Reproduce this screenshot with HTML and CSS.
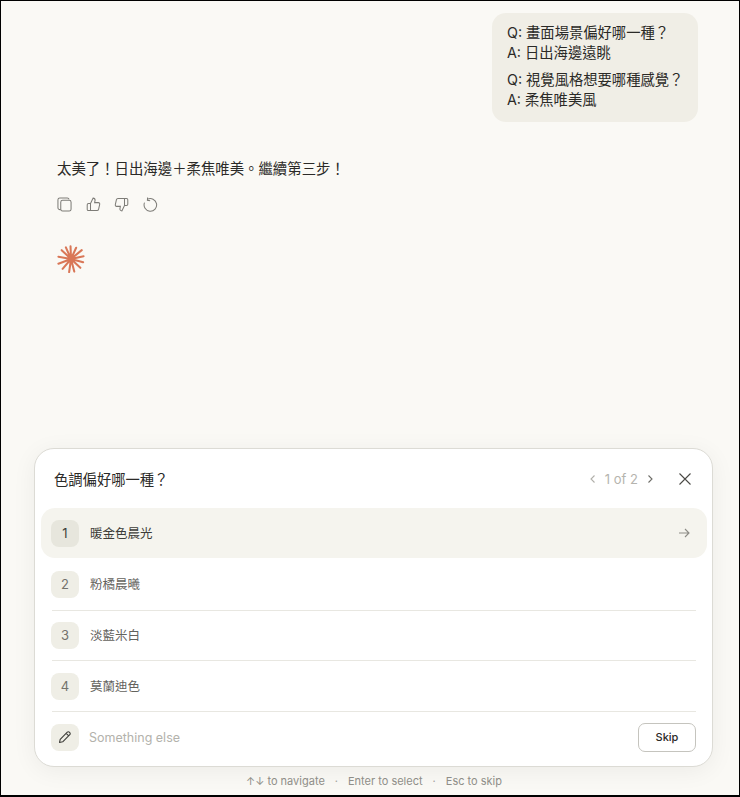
FILE: index.html
```html
<!DOCTYPE html>
<html lang="zh-TW">
<head>
    <meta charset="UTF-8">
    <meta name="viewport" content="width=device-width, initial-scale=1.0">
    <title>色調偏好</title>
    <link rel="stylesheet" href="styles.css">
</head>
<body>
    <div class="chat">
        <div class="user-row">
            <div class="bubble">
                <p>Q: 畫面場景偏好哪一種？<br>A: 日出海邊遠眺</p>
                <p>Q: 視覺風格想要哪種感覺？<br>A: 柔焦唯美風</p>
            </div>
        </div>

        <div class="reply">太美了！日出海邊＋柔焦唯美。繼續第三步！</div>

        <div class="actions">
            <svg class="action" viewBox="0 0 16 16"><rect x="4" y="3.500" width="11" height="11.500" rx="2"/><path d="M1 11.500V3a2 2 0 0 1 2-2h8a2 2 0 0 1 1.900 1.500M1 11.500a2 2 0 0 0 3 1.700"/></svg>
            <svg class="action" viewBox="0 0 16 16"><path d="M4.8 7 7.6 1.2c1.4 0 2.1 1 2.1 2.2L9.2 6h4c1 0 1.6.9 1.4 1.8l-1.2 5.4c-.2.8-.8 1.3-1.6 1.3H2.6c-.8 0-1.3-.5-1.3-1.3V8.3C1.3 7.5 1.8 7 2.6 7h2.2v7.500"/></svg>
            <svg class="action" viewBox="0 0 16 16"><path d="M11.2 9 8.4 14.800c-1.400 0-2.100-1-2.100-2.200l.5-2.600h-4c-1 0-1.600-.9-1.400-1.800l1.200-5.400C2.800 2 3.400 1.500 4.200 1.500h9.200c.8 0 1.300.5 1.300 1.300v5c0 .7-.5 1.200-1.300 1.200h-2.200V1.500"/></svg>
            <svg class="action" viewBox="0 0 16 16"><path d="M4.7 2.500A6.700 6.700 0 1 1 1.600 6"/><path d="M4.900 .6 4.700 3.500 7.600 4"/></svg>
        </div>

        <svg class="spark" viewBox="0 0 30 30">
            <path d="M15 15 14.500 1.500M15 15 20.500 3M15 15 26.500 5.500M15 15 28.500 12M15 15 28 18.500M15 15 25 24.500M15 15 18.500 28.500M15 15 13 29M15 15 6 25.500M15 15 1.500 20M15 15 1.500 12.500M15 15 5 5.500M15 15 9.500 2.500"/>
        </svg>
    </div>

    <div class="card">
        <div class="card-head">
            <div class="question">色調偏好哪一種？</div>
            <div class="pager">
                <svg class="chev" viewBox="0 0 10 10"><path d="M6.5 1.500 3 5l3.500 3.500"/></svg>
                <span>1 of 2</span>
                <svg class="chev dark" viewBox="0 0 10 10"><path d="M3.500 1.500 7 5 3.500 8.500"/></svg>
            </div>
            <svg class="close" viewBox="0 0 14 14"><path d="M1.500 1.500l11 11M12.500 1.500l-11 11"/></svg>
        </div>

        <div class="option active">
            <span class="num">1</span>
            <span class="label">暖金色晨光</span>
            <svg class="arrow" viewBox="0 0 12 12"><path d="M1 6h10M7 2l4 4-4 4"/></svg>
        </div>
        <div class="option"><span class="num">2</span><span class="label">粉橘晨曦</span></div>
        <div class="option"><span class="num">3</span><span class="label">淡藍米白</span></div>
        <div class="option"><span class="num">4</span><span class="label">莫蘭迪色</span></div>

        <div class="other">
            <span class="num">
                <svg class="pencil" viewBox="0 0 14 14"><path d="M1.500 12.500l.7-3.200L9.300 2.200a1.400 1.400 0 0 1 2 0l.5.500a1.400 1.400 0 0 1 0 2l-7.100 7.100zM8.200 3.300l2.500 2.500"/></svg>
            </span>
            <span class="placeholder">Something else</span>
            <button class="skip">Skip</button>
        </div>
    </div>

    <div class="hints">
        <span>↑↓ to navigate</span>
        <span class="dot">·</span>
        <span>Enter to select</span>
        <span class="dot">·</span>
        <span>Esc to skip</span>
    </div>
</body>
</html>
```

FILE: styles.css
```css
* {
    box-sizing: border-box;
}
html, body {
    height: 100%;
}
body {
    margin: 0;
    height: 797px;
    overflow: hidden;
    display: flex;
    flex-direction: column;
    background-color: #faf9f5;
    border: 1px solid #000;
    border-bottom-width: 2px;
    color: #2b2a27;
    font-family: Inter, "Noto Sans CJK TC", sans-serif;
}
.chat {
    flex: 1;
    padding: 12px 41px 0 56px;
}
.user-row {
    display: flex;
    justify-content: flex-end;
}
.bubble {
    width: 206px;
    height: 109px;
    padding: 10px 0 10px 15px;
    background-color: #f0eee6;
    border-radius: 14px;
    font-size: 14.3px;
    line-height: 20px;
    white-space: nowrap;
}
.bubble p {
    margin: 0 0 7px;
}
.reply {
    margin-top: 37px;
    font-size: 14.4px;
    line-height: 20px;
}
.actions {
    display: flex;
    gap: 13.7px;
    margin-top: 18px;
}
.action {
    width: 15px;
    height: 15px;
    fill: none;
    stroke: #7d7c77;
    stroke-width: 1.1;
}
.spark {
    display: block;
    width: 28px;
    height: 28px;
    margin-top: 33px;
    margin-left: 0;
    fill: none;
    stroke: #d97757;
    stroke-width: 2.2;
    stroke-linecap: round;
}
.card {
    width: 679px;
    height: 319px;
    margin-left: 33px;
    padding: 0 5px 0 6px;
    background-color: #fff;
    border: 1px solid #dcdbd5;
    border-radius: 20px;
    box-shadow: 0 4px 24px rgba(0, 0, 0, 0.06);
}
.card-head {
    display: flex;
    align-items: center;
    height: 59px;
    padding: 0 15px 0 13px;
}
.question {
    flex: 1;
    font-size: 14.3px;
}
.pager {
    display: flex;
    align-items: center;
    gap: 7px;
    margin-right: 23px;
    color: #b5b4ae;
    font-size: 13px;
}
.chev {
    width: 10px;
    height: 10px;
    fill: none;
    stroke: #b0afa9;
    stroke-width: 1.1;
}
.chev.dark {
    stroke: #6e6d68;
}
.close {
    width: 14px;
    height: 14px;
    fill: none;
    stroke: #4a4945;
    stroke-width: 1.1;
}
.option {
    display: flex;
    align-items: center;
    gap: 11px;
    height: 51px;
    margin: 0 11px;
    border-bottom: 1px solid #e8e7e1;
    font-size: 12.5px;
    color: #63625d;
}
.option:nth-of-type(3) {
    height: 52px;
}
.option:nth-of-type(4) {
    height: 50px;
}
.option.active {
    height: 50px;
    margin: 0 0 1px;
    padding: 0 11px;
    border-bottom: 0;
    border-radius: 14px;
    background-color: #f5f4ee;
    color: #3d3d39;
}
.num {
    display: flex;
    align-items: center;
    justify-content: center;
    flex: none;
    width: 28px;
    height: 27px;
    margin-left: -1px;
    padding-bottom: 1px;
    border-radius: 8px;
    background-color: #efeee6;
    font-size: 13px;
    color: #73726c;
}
.active .num {
    background-color: #e7e6dd;
    color: #3d3d39;
}
.label {
    flex: 1;
    padding-bottom: 2px;
}
.arrow {
    width: 12px;
    height: 12px;
    margin-right: 6px;
    fill: none;
    stroke: #8d8c86;
    stroke-width: 1.1;
}
.other {
    display: flex;
    align-items: center;
    gap: 10px;
    height: 50px;
    margin: 0 11px;
}
.pencil {
    width: 14px;
    height: 14px;
    fill: none;
    stroke: #3d3d39;
    stroke-width: 1.1;
    stroke-linejoin: round;
}
.placeholder {
    flex: 1;
    font-size: 12.5px;
    color: #b3b2ac;
}
.skip {
    width: 58px;
    height: 29px;
    padding: 0;
    background-color: #fff;
    border: 1px solid #c5c4be;
    border-radius: 7px;
    font-family: inherit;
    font-size: 11px;
    font-weight: 500;
    color: #2b2a27;
}
.hints {
    display: flex;
    justify-content: center;
    align-items: center;
    gap: 10px;
    height: 28px;
    padding-left: 8px;
    font-size: 11px;
    color: #8f8e88;
}
.dot {
    color: #a3a29c;
}
```
